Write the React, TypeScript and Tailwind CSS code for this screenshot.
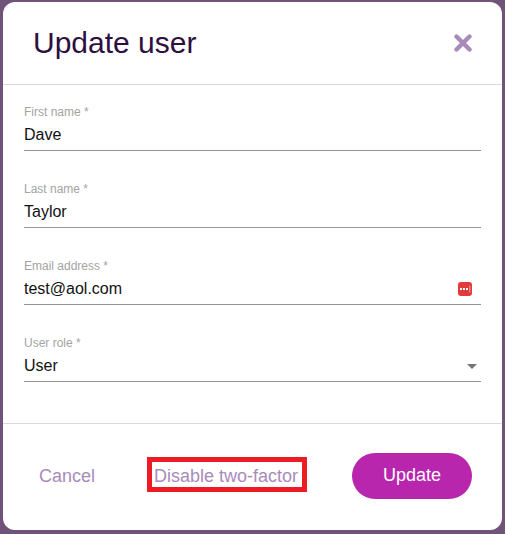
import React from "react";

type FieldProps = {
  label: string;
  value: string;
  children?: React.ReactNode;
};

function Field({ label, value, children }: FieldProps) {
  return (
    <div className="flex h-[48px] flex-col border-b border-[#949494]">
      <label className="h-[18px] text-[12px] leading-[18px] text-[#a3a3a3]">{label}</label>
      <div className="flex h-[28px] items-center justify-between text-[16px] leading-[28px] text-[#111]">
        <span>{value}</span>
        {children}
      </div>
    </div>
  );
}

export default function App() {
  return (
    <div className="h-[534px] w-[505px] overflow-hidden bg-[#6f5379] pl-[3px] pt-[2px] font-['Liberation_Sans',Arial,sans-serif]">
      <div className="flex h-[528px] w-[499px] flex-col rounded-[12px] bg-white">
        <div className="flex h-[83px] items-center justify-between border-b border-[#e0d5e6] pl-[30px] pr-[30px]">
          <h2 className="text-[30px] leading-[36px] text-[#2e0f3f]">Update user</h2>
          <button className="text-[#a98bbb]">
            <svg className="block" width="18" height="18" viewBox="0 0 18 18" fill="none">
              <path d="M2.5 2.5 15.5 15.5M15.5 2.5 2.5 15.5" stroke="currentColor" strokeWidth="4.4" strokeLinecap="round" />
            </svg>
          </button>
        </div>

        <div className="flex h-[338px] flex-col gap-[29px] pl-[21px] pr-[21px] pt-[18px]">
          <Field label="First name *" value="Dave" />
          <Field label="Last name *" value="Taylor" />
          <Field label="Email address *" value="test@aol.com">
            <svg className="mr-[9px]" width="14" height="14" viewBox="0 0 14 14">
              <rect width="14" height="14" rx="3" fill="#e03c3c" />
              <rect x="2" y="6" width="2" height="2" fill="#fff" />
              <rect x="5" y="6" width="2" height="2" fill="#fff" />
              <rect x="8" y="6" width="2" height="2" fill="#fff" />
              <rect x="11.3" y="3.5" width="1" height="7" fill="#f5a5a5" />
            </svg>
          </Field>
          <Field label="User role *" value="User">
            <svg className="mr-[4px]" width="10" height="5" viewBox="0 0 10 5">
              <path d="M0 0h10L5 5z" fill="#757575" />
            </svg>
          </Field>
        </div>

        <div className="flex h-[107px] items-center border-t border-[#e0d5e6] pb-[2px]">
          <span className="ml-[36px] text-[18px] text-[#a98bbb]">Cancel</span>
          <span className="mb-[3px] ml-[52px] flex h-[35px] w-[160px] items-center border-[5px] border-[#ed1c24] pl-[2px] pt-[3px] text-[18px] text-[#a98bbb]">
            Disable two-factor
          </span>
          <button className="ml-[45px] h-[46px] w-[120px] rounded-full bg-[#b826ad] pb-[2px] text-[18px] text-white">Update</button>
        </div>
      </div>
    </div>
  );
}
